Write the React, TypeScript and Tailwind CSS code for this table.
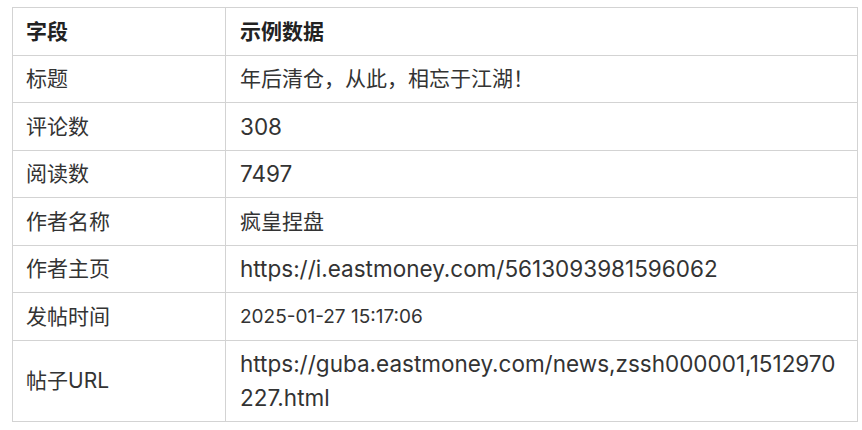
const rows = [
  { field: "标题", value: "年后清仓，从此，相忘于江湖！", latin: false },
  { field: "评论数", value: "308", latin: true },
  { field: "阅读数", value: "7497", latin: true },
  { field: "作者名称", value: "疯皇捏盘", latin: false },
  { field: "作者主页", value: "https://i.eastmoney.com/5613093981596062", latin: true },
  { field: "发帖时间", value: "2025-01-27 15:17:06", small: true },
  { field: "帖子URL", value: "https://guba.eastmoney.com/news,zssh000001,1512970227.html", latin: true },
];

function valueClass(row: (typeof rows)[number]) {
  if (row.small) return "border border-[#d3d3d3] px-[14px] py-[6.5px] align-middle text-[19px] leading-[33.5px]";
  if (row.latin) return "border border-[#d3d3d3] px-[14px] py-[6.5px] align-middle text-[22.5px] leading-[33.5px] break-all";
  return "border border-[#d3d3d3] px-[14px] py-[6.5px] align-middle text-[21px] leading-[33.5px]";
}

export default function App() {
  return (
    <div className="h-[430px] w-[862px] bg-white pl-[12px] pt-[7px] font-['Inter','Noto_Sans_CJK_SC',sans-serif] text-[#333]">
      <table className="w-[846px] table-fixed border-collapse border border-[#d3d3d3]">
        <colgroup>
          <col className="w-[213px]" />
          <col />
        </colgroup>
        <thead>
          <tr>
            <th className="border border-[#d3d3d3] px-[13px] py-[6.5px] text-left text-[21px] leading-[33.5px] font-bold text-[#222]">字段</th>
            <th className="border border-[#d3d3d3] px-[14px] py-[6.5px] text-left text-[21px] leading-[33.5px] font-bold text-[#222]">示例数据</th>
          </tr>
        </thead>
        <tbody>
          {rows.map((row) => (
            <tr key={row.field}>
              <td className="border border-[#d3d3d3] px-[13px] py-[6.5px] align-middle text-[21px] leading-[33.5px]">{row.field}</td>
              <td className={valueClass(row)}>{row.value}</td>
            </tr>
          ))}
        </tbody>
      </table>
    </div>
  );
}
